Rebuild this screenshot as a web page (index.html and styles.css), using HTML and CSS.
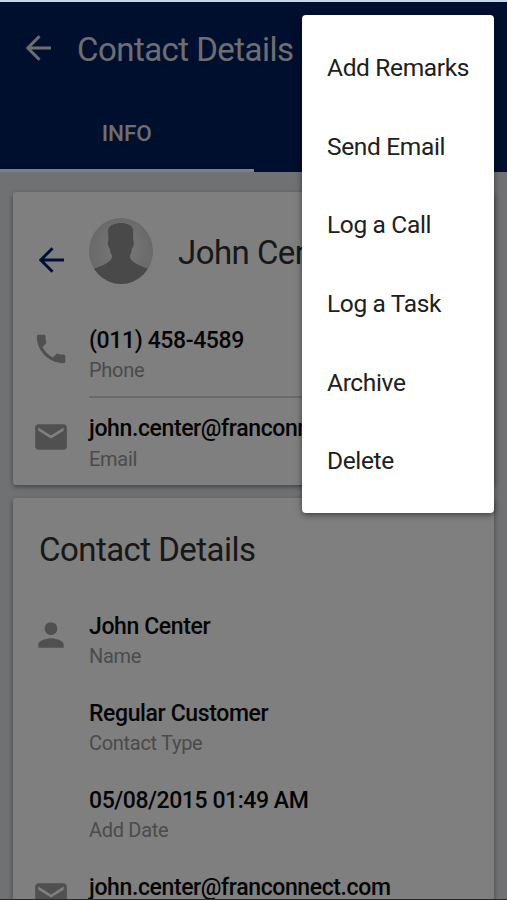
FILE: index.html
```
<!DOCTYPE html>
<html lang="en">
<head>
    <meta charset="UTF-8">
    <meta name="viewport" content="width=device-width, initial-scale=1.0">
    <title>Contact Details</title>
    <link rel="stylesheet" href="styles.css">
</head>
<body>
    <div class="screen">
        <header class="header">
            <div class="toolbar">
                <svg class="back" viewBox="0 0 26 26"><path d="M25 13H2M13.500 1.200L1.800 13l11.700 11.800"/></svg>
                <h1>Contact Details</h1>
            </div>
            <nav class="tabs">
                <a class="tab active">INFO</a>
                <a class="tab"></a>
            </nav>
        </header>

        <main class="content">
            <section class="card summary">
                <div class="person">
                    <svg class="back dark" viewBox="0 0 26 26"><path d="M25 13H2M13.500 1.200L1.800 13l11.700 11.800"/></svg>
                    <svg class="avatar" viewBox="0 0 64 66" preserveAspectRatio="none">
                        <defs>
                            <radialGradient id="halo"><stop offset="0.4" stop-color="#e6e6e6"/><stop offset="1" stop-color="#d4d4d4"/></radialGradient>
                            <clipPath id="round"><ellipse cx="32" cy="33" rx="32" ry="33"/></clipPath>
                        </defs>
                        <g clip-path="url(#round)">
                            <rect width="64" height="66" fill="url(#halo)"/>
                            <path fill="#929292" d="M19 12C20 7 26 5 32 5s11 2 12.200 7v10.500c1.300 2 .5 6-1.200 8-.4 3-1 5-2 7v2c2 6 11 8 18 11.500v16H5V51c7-3.500 16-5.500 18-11.500v-2c-1.200-2-2-4-2.300-7-2-2-2.500-6-1.200-8z"/>
                        </g>
                    </svg>
                    <h2>John Center</h2>
                </div>
                <div class="row">
                    <svg class="icon" viewBox="0 0 24 24"><path d="M6.620 10.790c1.440 2.830 3.760 5.140 6.590 6.590l2.200-2.200c.27-.27.67-.36 1.020-.24 1.120.37 2.330.57 3.570.57.55 0 1 .45 1 1V20c0 .55-.45 1-1 1-9.390 0-17-7.610-17-17 0-.55.45-1 1-1h3.500c.55 0 1 .45 1 1 0 1.250.2 2.450.57 3.570.11.35.03.74-.25 1.020l-2.200 2.200z"/></svg>
                    <div class="field lined">
                        <p class="value">(011) 458-4589</p>
                        <p class="label">Phone</p>
                    </div>
                </div>
                <div class="row">
                    <svg class="icon mail" viewBox="0 0 24 24"><path d="M20 4H4c-1.100 0-1.990.9-1.990 2L2 18c0 1.100.9 2 2 2h16c1.100 0 2-.9 2-2V6c0-1.100-.9-2-2-2zm0 4l-8 5-8-5V6l8 5 8-5v2z"/></svg>
                    <div class="field">
                        <p class="value">john.center@franconnect.com</p>
                        <p class="label">Email</p>
                    </div>
                </div>
            </section>

            <section class="card details">
                <h2>Contact Details</h2>
                <div class="row">
                    <svg class="icon" viewBox="0 0 24 24"><path d="M12 12c2.210 0 4-1.790 4-4s-1.790-4-4-4-4 1.790-4 4 1.790 4 4 4zm0 2c-2.670 0-8 1.340-8 4v2h16v-2c0-2.660-5.330-4-8-4z"/></svg>
                    <div class="field">
                        <p class="value">John Center</p>
                        <p class="label">Name</p>
                    </div>
                </div>
                <div class="row">
                    <div class="field">
                        <p class="value">Regular Customer</p>
                        <p class="label">Contact Type</p>
                    </div>
                </div>
                <div class="row">
                    <div class="field">
                        <p class="value date">05/08/2015 01:49 AM</p>
                        <p class="label">Add Date</p>
                    </div>
                </div>
                <div class="row">
                    <svg class="icon mail" viewBox="0 0 24 24"><path d="M20 4H4c-1.100 0-1.990.9-1.990 2L2 18c0 1.100.9 2 2 2h16c1.100 0 2-.9 2-2V6c0-1.100-.9-2-2-2zm0 4l-8 5-8-5V6l8 5 8-5v2z"/></svg>
                    <div class="field">
                        <p class="value">john.center@franconnect.com</p>
                    </div>
                </div>
            </section>
        </main>

        <div class="overlay"></div>
        <ul class="menu">
            <li>Add Remarks</li>
            <li>Send Email</li>
            <li>Log a Call</li>
            <li>Log a Task</li>
            <li>Archive</li>
            <li>Delete</li>
        </ul>
    </div>
</body>
</html>
```
FILE: styles.css
```
* {
    box-sizing: border-box;
    margin: 0;
    padding: 0;
}
body {
    font-family: Roboto, sans-serif;
    background: #dfe2e6;
}
.screen {
    position: relative;
    height: 900px;
    overflow: hidden;
    border-top: 2px solid #c8d4e8;
    border-bottom: 1px solid #29272a;
}
.header {
    height: 170px;
    background: #001e5a;
    color: #fff;
}
.toolbar {
    display: flex;
    align-items: center;
    height: 92px;
    padding-left: 26px;
}
.toolbar h1 {
    margin-left: 25px;
    font-size: 33px;
    font-weight: 400;
    line-height: 40px;
    letter-spacing: -.54px;
    padding-top: 4px;
    color: #dcdde2;
}
.back {
    flex: none;
    width: 26px;
    height: 26px;
    fill: none;
    stroke: #dcdde2;
    stroke-width: 3;
}
.dark {
    stroke: #001e6e;
    margin-top: 18px;
    margin-left: 1px;
    margin-right: -1px;
}
.tabs {
    display: flex;
    height: 78px;
}
.tab {
    width: 254px;
    padding-top: 24px;
    text-align: center;
    font-size: 22.5px;
    font-weight: 500;
    line-height: 30px;
    color: #dcdde2;
}
.active {
    border-bottom: 3px solid #fff;
}
.content {
    padding: 20px 13px 0;
}
.card {
    background: #fff;
    border-radius: 3px;
    box-shadow: 0 2px 5px rgba(0, 0, 0, .4);
    padding-left: 20px;
}
.summary {
    height: 293px;
    margin-bottom: 13px;
}
.person {
    display: flex;
    align-items: center;
    height: 118px;
    padding-left: 5px;
}
.avatar {
    flex: none;
    width: 64px;
    height: 66px;
    margin: 0 25px;
}
h2 {
    font-size: 33px;
    font-weight: 400;
    line-height: 40px;
    letter-spacing: -.54px;
    color: #303030;
    white-space: nowrap;
}
.person h2 {
    padding-top: 4px;
}
.row {
    display: grid;
    grid-template-columns: 36px 1fr;
    column-gap: 20px;
    padding-top: 15px;
}
.icon {
    width: 38px;
    height: 38px;
    margin-top: 5px;
    margin-left: -1px;
    fill: #a0a0a0;
}
.field {
    grid-column: 2;
}
.lined {
    padding-bottom: 11px;
    border-bottom: 2px solid #d4d4d4;
}
.value {
    padding-top: 1px;
    font-size: 23px;
    font-weight: 500;
    line-height: 30px;
    letter-spacing: -.38px;
    color: #080808;
}
.date {
    letter-spacing: -.44px;
}
.label {
    margin-top: -1px;
    font-size: 20px;
    line-height: 30px;
    letter-spacing: -.3px;
    color: #969696;
}
.mail + .field .label {
    padding-top: 1px;
}
.details {
    height: 460px;
    padding-top: 32px;
}
.details h2 {
    padding-left: 6px;
    margin-bottom: 26px;
}
.details .row {
    height: 87px;
}
.overlay {
    position: absolute;
    inset: 0;
    background: rgba(0, 0, 0, .5);
}
.menu {
    position: absolute;
    top: 13px;
    left: 302px;
    width: 192px;
    height: 498px;
    padding: 14px 0 12px;
    border-radius: 4px;
    background: #fff;
    box-shadow: 0 2px 6px rgba(0, 0, 0, .5);
    list-style: none;
}
.menu li {
    height: 78.7px;
    padding-left: 25px;
    font-size: 24.5px;
    line-height: 78.7px;
    letter-spacing: -.35px;
    color: #202020;
    white-space: nowrap;
}
```
